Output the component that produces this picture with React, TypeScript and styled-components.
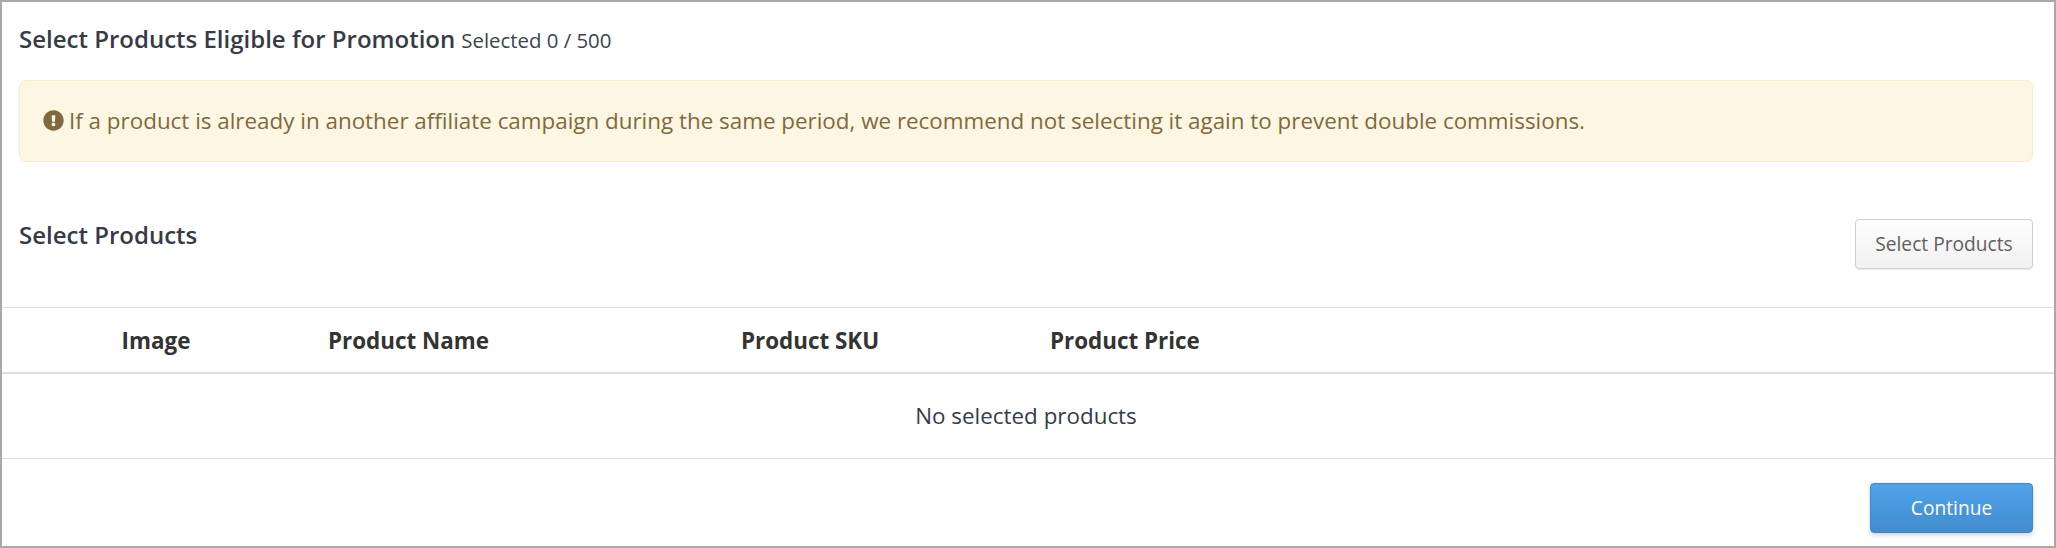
import { FC } from 'react';
import styled, { createGlobalStyle } from 'styled-components';
import { FaExclamationCircle } from 'react-icons/fa';

const GlobalStyle = createGlobalStyle`
  html, body {
    margin: 0;
    padding: 0;
    background: #fff;
  }
  body {
    font-family: 'Open Sans', 'Noto Sans', sans-serif;
    color: #333;
  }
`;

const Panel = styled.div`
  width: 2056px;
  height: 548px;
  box-sizing: border-box;
  border: 2px solid #a9a9a9;
  background: #fff;
  display: flex;
  flex-direction: column;
`;

const Header = styled.div`
  display: flex;
  align-items: baseline;
  gap: 6px;
  height: 78px;
  padding: 21px 17px 0;
  box-sizing: border-box;
`;

const Title = styled.h3`
  margin: 0;
  font-size: 24px;
  line-height: 32px;
  font-weight: 600;
  color: #363b46;
`;

const Counter = styled.span`
  font-size: 20.4px;
  color: #3d424c;
`;

const Alert = styled.div`
  display: flex;
  align-items: center;
  gap: 5px;
  height: 82px;
  margin: 0 21px 0 17px;
  padding: 0 23px 1px;
  box-sizing: border-box;
  background: #fdf6e3;
  border: 1px solid #f8ecca;
  border-radius: 7px;
  color: #7f6a3f;
  font-size: 22.4px;
`;

const AlertIcon = styled(FaExclamationCircle)`
  width: 21px;
  height: 21px;
  color: #7f6a3f;
  flex-shrink: 0;
`;

const Toolbar = styled.div`
  display: flex;
  justify-content: space-between;
  align-items: flex-start;
  height: 145px;
  padding: 57px 21px 0 17px;
  box-sizing: border-box;
`;

const SectionTitle = styled.h4`
  margin: 0;
  font-size: 24px;
  line-height: 32px;
  font-weight: 600;
  color: #363b46;
`;

const Button = styled.button<{ $primary?: boolean }>`
  height: 50px;
  box-sizing: border-box;
  border-radius: 4px;
  font-family: inherit;
  font-size: 19.2px;
  padding: 0 0 ${(p) => (p.$primary ? 1 : 2)}px;
  border: 1px solid ${(p) => (p.$primary ? '#3f87c9' : '#cfcfcf')};
  color: ${(p) => (p.$primary ? '#fff' : '#606060')};
  background: ${(p) =>
    p.$primary
      ? 'linear-gradient(#50a3ec, #418ccd)'
      : 'linear-gradient(#fefefe, #f1f1f1)'};
  box-shadow: ${(p) =>
    p.$primary ? '0 2px 4px rgba(0,0,0,.18)' : '0 1px 1px rgba(0,0,0,.08)'};
  width: ${(p) => (p.$primary ? '163px' : '178px')};
`;

const Table = styled.table`
  width: 100%;
  border-collapse: collapse;
  table-layout: fixed;
  border-top: 1px solid #dcdcdc;
`;

const HeadCell = styled.th<{ $width: number; $center?: boolean }>`
  width: ${(p) => p.$width}px;
  height: 65px;
  padding: 2px ${(p) => (p.$center ? 2 : 0)}px 0 ${(p) => (p.$center ? 0 : 16)}px;
  box-sizing: border-box;
  text-align: ${(p) => (p.$center ? 'center' : 'left')};
  font-size: 22.4px;
  font-weight: 700;
  color: #333;
  border-bottom: 2px solid #dfdfdf;
`;

const EmptyCell = styled.td`
  height: 86px;
  padding: 0 4px 1px 0;
  box-sizing: border-box;
  text-align: center;
  font-size: 22.4px;
  color: #363b46;
  border-bottom: 1px solid #dcdcdc;
`;

const Footer = styled.div`
  display: flex;
  justify-content: flex-end;
  padding: 24px 21px 0 0;
`;

const App: FC = () => (
  <>
    <GlobalStyle />
    <Panel>
      <Header>
        <Title>Select Products Eligible for Promotion</Title>
        <Counter>Selected 0 / 500</Counter>
      </Header>
      <Alert>
        <AlertIcon />
        <span>
          If a product is already in another affiliate campaign during the same
          period, we recommend not selecting it again to prevent double
          commissions.
        </span>
      </Alert>
      <Toolbar>
        <SectionTitle>Select Products</SectionTitle>
        <Button>Select Products</Button>
      </Toolbar>
      <Table>
        <thead>
          <tr>
            <HeadCell $width={310} $center>
              Image
            </HeadCell>
            <HeadCell $width={413}>Product Name</HeadCell>
            <HeadCell $width={309}>Product SKU</HeadCell>
            <HeadCell $width={1020}>Product Price</HeadCell>
          </tr>
        </thead>
        <tbody>
          <tr>
            <EmptyCell colSpan={4}>No selected products</EmptyCell>
          </tr>
        </tbody>
      </Table>
      <Footer>
        <Button $primary>Continue</Button>
      </Footer>
    </Panel>
  </>
);

export default App;
